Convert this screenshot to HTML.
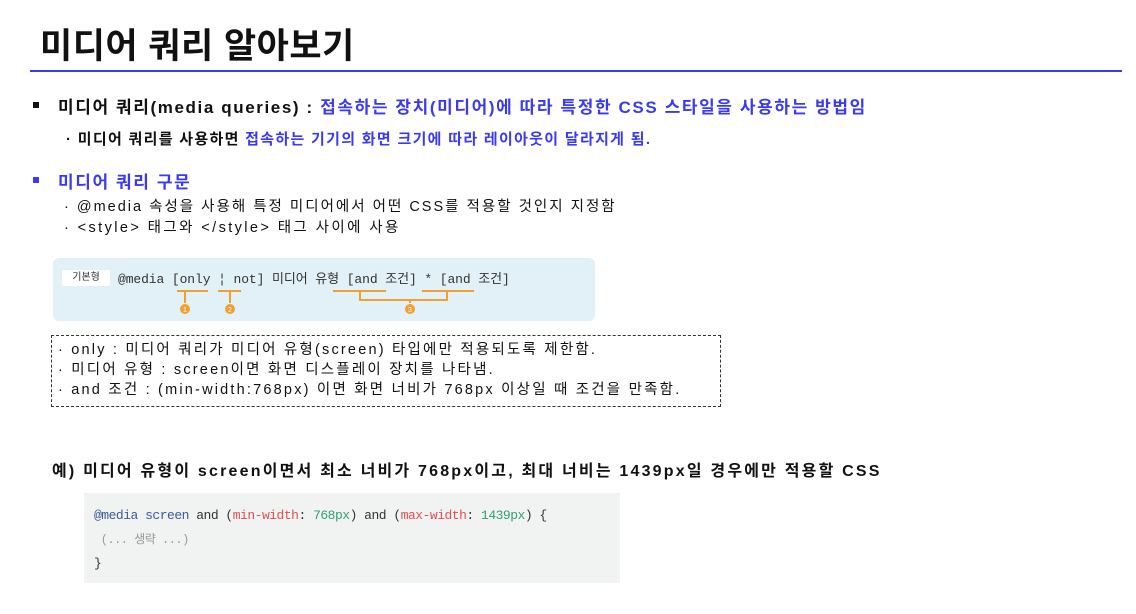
<!DOCTYPE html>
<html><head><meta charset="utf-8"><style>
body{margin:0;width:1136px;height:614px;background:#fff;position:relative;overflow:hidden;font-family:"Liberation Sans","Noto Sans CJK KR",sans-serif;color:#111}
.a{position:absolute;white-space:nowrap}
.b{color:#3a3af0}
.sq{position:absolute;width:6px;height:6px;background:#111}
.mono{font-family:"Liberation Mono","Noto Sans CJK KR",monospace}
</style></head><body>
<div class="a" style="left:40px;top:18px;font-size:35px;font-weight:bold;letter-spacing:0.5px">미디어 쿼리 알아보기</div>
<div class="a" style="left:30px;top:70px;width:1092px;height:2px;background:#3a3af0"></div>

<div class="sq" style="left:33px;top:102px"></div>
<div class="a" style="left:58px;top:93px;font-size:17px;font-weight:bold;letter-spacing:1.6px">미디어 쿼리(media queries) : <span class="b">접속하는 장치(미디어)에 따라 특정한 CSS 스타일을 사용하는 방법임</span></div>
<div class="a" style="left:66px;top:128px;font-size:15px;font-weight:bold;letter-spacing:1.3px">· 미디어 쿼리를 사용하면 <span class="b">접속하는 기기의 화면 크기에 따라 레이아웃이 달라지게 됨.</span></div>

<div class="sq" style="left:33px;top:177px;background:#3a3af0"></div>
<div class="a b" style="left:58px;top:168px;font-size:17px;font-weight:bold;letter-spacing:1.6px">미디어 쿼리 구문</div>
<div class="a" style="left:64px;top:195px;font-size:14.5px;letter-spacing:2px">· @media 속성을 사용해 특정 미디어에서 어떤 CSS를 적용할 것인지 지정함</div>
<div class="a" style="left:64px;top:216px;font-size:14.5px;letter-spacing:2.4px">· &lt;style&gt; 태그와 &lt;/style&gt; 태그 사이에 사용</div>

<div class="a" style="left:53px;top:258px;width:542px;height:63px;background:#e2f0f7;border-radius:6px"></div>
<div class="a" style="left:62px;top:270px;width:48px;height:16px;background:#fff;border-radius:2px;font-size:10px;text-align:center;line-height:16px;color:#333">기본형</div>
<div class="a mono" style="left:118px;top:268px;font-size:13px;color:#333;letter-spacing:-0.1px">@media [only ¦ not] 미디어 유형 [and 조건] * [and 조건]</div>
<svg class="a" style="left:0;top:0" width="620" height="330">
<g stroke="#f0a030" stroke-width="2" fill="none">
<path d="M177 291H208M185 291V303"/>
<path d="M218 291H241M230 291V303"/>
<path d="M333 291H386M360 291V300H447V291M422 291H474M410 300V303"/>
</g>
<g fill="#f0a030"><circle cx="185" cy="309" r="5"/><circle cx="230" cy="309" r="5"/><circle cx="410" cy="309" r="5"/></g>
<g fill="#fff" font-size="7" font-family="Liberation Sans" text-anchor="middle"><text x="185" y="312">1</text><text x="230" y="312">2</text><text x="410" y="312">3</text></g>
</svg>

<div class="a" style="left:51px;top:335px;width:668px;height:70px;border:1px dashed #333"></div>
<div class="a" style="left:58px;top:340px;font-size:14.5px;line-height:20px;letter-spacing:2.2px">· only : 미디어 쿼리가 미디어 유형(screen) 타입에만 적용되도록 제한함.<br>· 미디어 유형 : screen이면 화면 디스플레이 장치를 나타냄.<br>· and 조건 : (min-width:768px) 이면 화면 너비가 768px 이상일 때 조건을 만족함.</div>

<div class="a" style="left:52px;top:457px;font-size:16px;font-weight:bold;letter-spacing:2.2px">예) 미디어 유형이 screen이면서 최소 너비가 768px이고, 최대 너비는 1439px일 경우에만 적용할 CSS</div>

<div class="a" style="left:84px;top:493px;width:536px;height:90px;background:#f1f2f2"></div>
<div class="a mono" style="left:94px;top:504px;font-size:13px;line-height:24px;color:#333;letter-spacing:-0.5px"><span style="color:#3a5a9a">@media screen</span> and (<span style="color:#e05050">min-width</span>: <span style="color:#30a070">768px</span>) and (<span style="color:#e05050">max-width</span>: <span style="color:#30a070">1439px</span>) {<br><span style="color:#999;font-size:12px">&nbsp;(... 생략 ...)</span><br>}</div>
</body></html>
